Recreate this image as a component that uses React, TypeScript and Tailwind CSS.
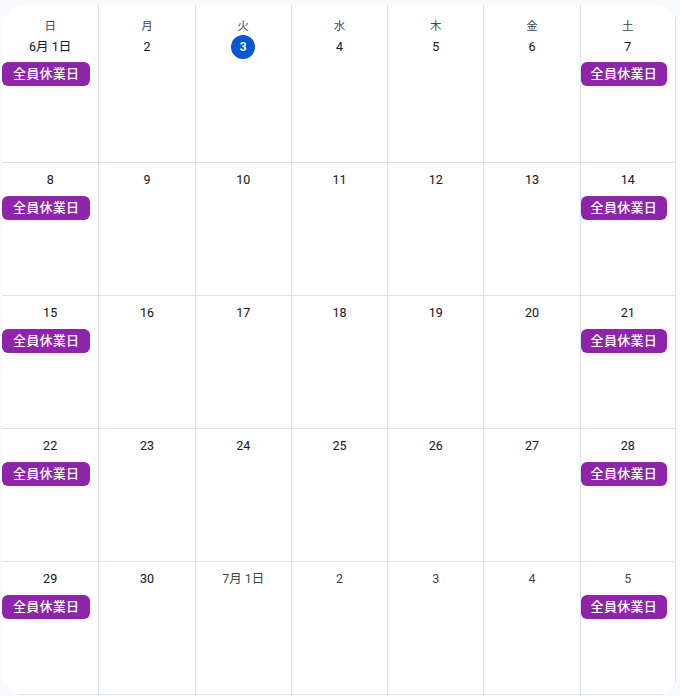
import React from "react";

type Day = {
  label: string;
  today?: boolean;
  muted?: boolean;
  holiday?: boolean;
};

const weekdays = ["日", "月", "火", "水", "木", "金", "土"];

const weeks: Day[][] = [
  ["6月 1日", "2", "3", "4", "5", "6", "7"],
  ["8", "9", "10", "11", "12", "13", "14"],
  ["15", "16", "17", "18", "19", "20", "21"],
  ["22", "23", "24", "25", "26", "27", "28"],
  ["29", "30", "7月 1日", "2", "3", "4", "5"],
].map((row, w) =>
  row.map((label, i) => ({
    label,
    today: w === 0 && i === 2,
    muted: w === 4 && i >= 2,
    holiday: i === 0 || i === 6,
  }))
);

function Chip() {
  return (
    <div className="mr-2 h-6 rounded-md bg-[#8e24aa] text-white text-[13px] font-medium leading-6 text-center tracking-[0.3px]">
      全員休業日
    </div>
  );
}

function DayNumber({ day }: { day: Day }) {
  if (day.today) {
    return (
      <div className="flex justify-center">
        <span className="w-6 h-6 rounded-full bg-[#0b57d0] text-white text-[12px] font-semibold leading-6 text-center">
          {day.label}
        </span>
      </div>
    );
  }
  return (
    <div
      className={`h-6 leading-6 text-center text-[12.5px] ${
        day.muted ? "text-[#444746]" : "text-[#1f1f1f] [-webkit-text-stroke:0.1px_#1f1f1f]"
      }`}
    >
      {day.label}
    </div>
  );
}

export default function App() {
  return (
    <div
      className="w-[680px] h-[696px] bg-[#f8fafd] pt-[5px] pl-[2px] pr-[2px] overflow-hidden"
      style={{ fontFamily: 'Roboto, "Noto Sans CJK JP", sans-serif' }}
    >
      <div className="bg-white rounded-[24px] overflow-hidden h-[691px]">
        <div className="w-[674px] grid grid-cols-7">
          {weeks.map((week, w) =>
            week.map((day, i) => (
              <div
                key={`${w}-${i}`}
                className={`border-b border-[#dde3ea] ${i > 0 ? "border-l" : ""} ${
                  i === 6 ? "border-r" : ""
                } ${w === 0 ? "h-[158px] pt-[13px]" : "h-[133px] pt-[5px]"}`}
              >
                {w === 0 && (
                  <div className="h-4 leading-4 text-center text-[11.5px] text-[#444746] mb-[1px]">
                    {weekdays[i]}
                  </div>
                )}
                <DayNumber day={day} />
                {day.holiday && (
                  <div className={w === 0 ? "mt-[3px]" : "mt-[4px]"}>
                    <Chip />
                  </div>
                )}
              </div>
            ))
          )}
        </div>
      </div>
    </div>
  );
}
